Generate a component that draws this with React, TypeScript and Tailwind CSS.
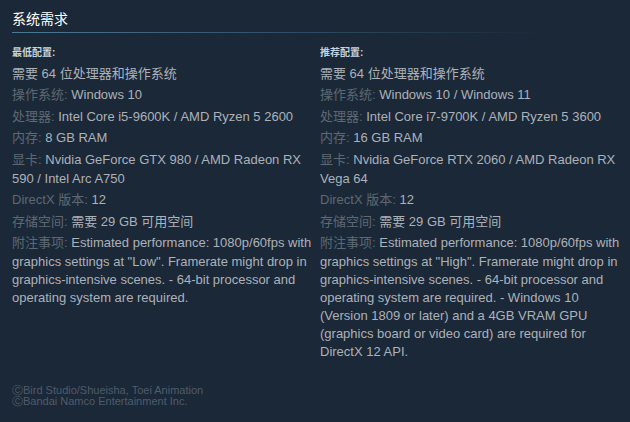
import React from 'react';

type Row = { label?: string; value: string };

const minimum: Row[] = [
  { value: '需要 64 位处理器和操作系统' },
  { label: '操作系统:', value: 'Windows 10' },
  { label: '处理器:', value: 'Intel Core i5-9600K / AMD Ryzen 5 2600' },
  { label: '内存:', value: '8 GB RAM' },
  { label: '显卡:', value: 'Nvidia GeForce GTX 980 / AMD Radeon RX 590 / Intel Arc A750' },
  { label: 'DirectX 版本:', value: '12' },
  { label: '存储空间:', value: '需要 29 GB 可用空间' },
  {
    label: '附注事项:',
    value:
      'Estimated performance: 1080p/60fps with graphics settings at "Low". Framerate might drop in graphics-intensive scenes. - 64-bit processor and operating system are required.',
  },
];

const recommended: Row[] = [
  { value: '需要 64 位处理器和操作系统' },
  { label: '操作系统:', value: 'Windows 10 / Windows 11' },
  { label: '处理器:', value: 'Intel Core i7-9700K / AMD Ryzen 5 3600' },
  { label: '内存:', value: '16 GB RAM' },
  { label: '显卡:', value: 'Nvidia GeForce RTX 2060 / AMD Radeon RX Vega 64' },
  { label: 'DirectX 版本:', value: '12' },
  { label: '存储空间:', value: '需要 29 GB 可用空间' },
  {
    label: '附注事项:',
    value:
      'Estimated performance: 1080p/60fps with graphics settings at "High". Framerate might drop in graphics-intensive scenes. - 64-bit processor and operating system are required. - Windows 10 (Version 1809 or later) and a 4GB VRAM GPU (graphics board or video card) are required for DirectX 12 API.',
  },
];

function ReqColumn({ title, rows }: { title: string; rows: Row[] }) {
  return (
    <div className="w-[306px] shrink-0">
      <div className="text-[10px] font-bold text-[#c6d4df] leading-[14px] mb-[5px]">{title}</div>
      <ul>
        {rows.map((r, i) => (
          <li key={i} className="text-[13px] leading-[18px] mb-[1.75px] text-[#acb2b8]">
            {r.label && <span className="text-[#5d6873] leading-[20px]">{r.label} </span>}
            {r.value}
          </li>
        ))}
      </ul>
    </div>
  );
}

function Copy({ children }: { children: React.ReactNode }) {
  return (
    <div>
      <span style={{ fontFamily: '"DejaVu Sans", sans-serif' }} className="text-[11px]">Ⓒ</span>
      {children}
    </div>
  );
}

export default function App() {
  return (
    <div
      className="w-[630px] h-[422px] bg-[#1b2838] pl-3 pr-1 pt-[9px] overflow-hidden"
      style={{ fontFamily: '"Liberation Sans", Arial, "Noto Sans CJK SC", sans-serif' }}
    >
      <h2 className="text-[14px] leading-[20px] text-white">系统需求</h2>
      <div className="mt-[3px] h-px w-[530px] bg-gradient-to-r from-[#4a7a98] via-[#2f5068] to-transparent" />
      <div className="flex gap-[2px] mt-[13px]">
        <ReqColumn title="最低配置:" rows={minimum} />
        <ReqColumn title="推荐配置:" rows={recommended} />
      </div>
      <div className="mt-[22px] text-[11px] leading-[11px] text-[#4f5c6b]">
        <Copy>Bird Studio/Shueisha, Toei Animation</Copy>
        <Copy>Bandai Namco Entertainment Inc.</Copy>
      </div>
    </div>
  );
}
